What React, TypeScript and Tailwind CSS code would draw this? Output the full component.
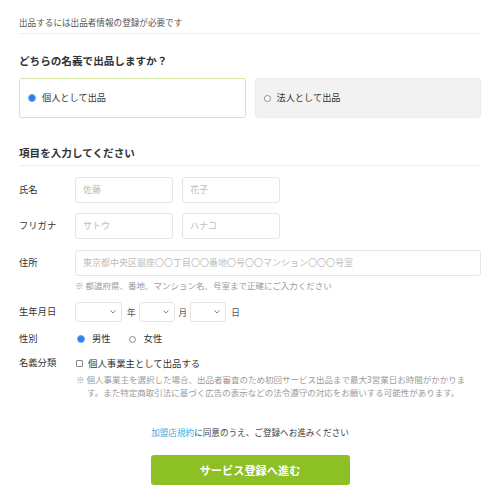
const Radio = ({ on }: { on?: boolean }) =>
  on ? (
    <span className="inline-block w-[8px] h-[8px] rounded-full bg-[#2a7ff0] border border-[#6fa8f5] shrink-0" />
  ) : (
    <span className="inline-block w-[7px] h-[7px] rounded-full bg-white border border-[#8a8a8a] shrink-0" />
  );

const Chevron = () => (
  <svg width="6" height="4" viewBox="0 0 6 4" className="shrink-0">
    <path d="M0.5 0.5 L3 3 L5.5 0.5" fill="none" stroke="#777" strokeWidth="0.9" />
  </svg>
);

const Field = ({ text, w }: { text: string; w: string }) => (
  <div className={`${w} h-[26px] border border-[#e6e6e6] rounded-[3px] flex items-center px-[7px] text-[9px] text-[#bdbdbd]`}>
    {text}
  </div>
);

const Select = ({ w }: { w: string }) => (
  <div className={`${w} h-[20px] border border-[#e6e6e6] rounded-[3px] flex items-center justify-end pr-[5px]`}>
    <Chevron />
  </div>
);

const App = () => {
  return (
    <div
      className="w-[500px] h-[497px] bg-white px-[19px] text-[#333]"
      style={{ fontFamily: '"Noto Sans CJK JP", "Noto Sans", sans-serif' }}
    >
      <div className="pt-[16px] pb-[5px] border-b border-[#eeeeee] text-[8.6px] leading-[12px] text-[#555]">
        出品するには出品者情報の登録が必要です
      </div>

      <h2 className="mt-[20px] text-[10.6px] leading-[14px] font-bold text-[#333]">
        どちらの名義で出品しますか？
      </h2>

      <div className="mt-[10px] flex gap-[9px]">
        <div className="flex-1 h-[40px] border border-[#d3e8a6] rounded-[3px] flex items-center gap-[6px] pl-[8px] text-[9.2px]">
          <Radio on />
          <span>個人として出品</span>
        </div>
        <div className="flex-1 h-[40px] bg-[#f2f2f2] border border-[#ececec] rounded-[3px] flex items-center gap-[6px] pl-[8px] text-[9.2px]">
          <Radio />
          <span>法人として出品</span>
        </div>
      </div>

      <h2 className="mt-[28px] pb-[5px] border-b border-[#eeeeee] text-[10.6px] leading-[14px] font-bold text-[#333]">
        項目を入力してください
      </h2>

      <div className="mt-[11px] flex items-center">
        <div className="w-[56px] text-[9.3px]">氏名</div>
        <div className="flex gap-[9px]">
          <Field text="佐藤" w="w-[98px]" />
          <Field text="花子" w="w-[98px]" />
        </div>
      </div>

      <div className="mt-[10px] flex items-center">
        <div className="w-[56px] text-[9.3px]">フリガナ</div>
        <div className="flex gap-[9px]">
          <Field text="サトウ" w="w-[98px]" />
          <Field text="ハナコ" w="w-[98px]" />
        </div>
      </div>

      <div className="mt-[11px] flex items-center">
        <div className="w-[56px] text-[9.3px]">住所</div>
        <Field text="東京都中央区銀座〇〇丁目〇〇番地〇号〇〇マンション〇〇〇号室" w="flex-1" />
      </div>
      <div className="mt-[4px] pl-[56px] text-[8.5px] leading-[11px] text-[#9a9a9a]">
        ※ 都道府県、番地、マンション名、号室まで正確にご入力ください
      </div>

      <div className="mt-[11px] flex items-center">
        <div className="w-[56px] text-[9.3px]">生年月日</div>
        <div className="flex items-center text-[8.6px] text-[#555]">
          <Select w="w-[47px]" />
          <span className="ml-[5px] mr-[3px]">年</span>
          <Select w="w-[36px]" />
          <span className="ml-[4px] mr-[3px]">月</span>
          <Select w="w-[36px]" />
          <span className="ml-[5px]">日</span>
        </div>
      </div>

      <div className="mt-[10px] flex items-center h-[14px]">
        <div className="w-[56px] text-[9.3px]">性別</div>
        <div className="flex items-center text-[9.3px] pl-[2px]">
          <Radio on />
          <span className="ml-[7px]">男性</span>
          <span className="ml-[18px]" />
          <Radio />
          <span className="ml-[8px]">女性</span>
        </div>
      </div>

      <div className="mt-[10px] flex items-center h-[14px]">
        <div className="w-[56px] text-[9.3px]">名義分類</div>
        <div className="flex items-center text-[9.4px] pl-[1px]">
          <span className="inline-block w-[7px] h-[7px] border border-[#888] rounded-[1px] bg-white" />
          <span className="ml-[5px]">個人事業主として出品する</span>
        </div>
      </div>
      <div className="mt-[3px] pl-[56px] text-[8.5px] leading-[13px] text-[#9a9a9a]">
        <div className="pl-[12px] -indent-[11px]">
          ※ 個人事業主を選択した場合、出品者審査のため初回サービス出品まで最大3営業日お時間がかかりま
          <br />
          す。また特定商取引法に基づく広告の表示などの法令遵守の対応をお願いする可能性があります。
        </div>
      </div>

      <div className="mt-[27px] text-center text-[8.6px] leading-[12px] text-[#444]">
        <span className="text-[#3aaee2]">加盟店規約</span>に同意のうえ、ご登録へお進みください
      </div>

      <div className="mt-[17px] flex justify-center">
        <button className="w-[199px] h-[30px] rounded-[3px] bg-[#8cc024] text-white text-[11.2px] font-bold">
          サービス登録へ進む
        </button>
      </div>
    </div>
  );
};

export default App;
